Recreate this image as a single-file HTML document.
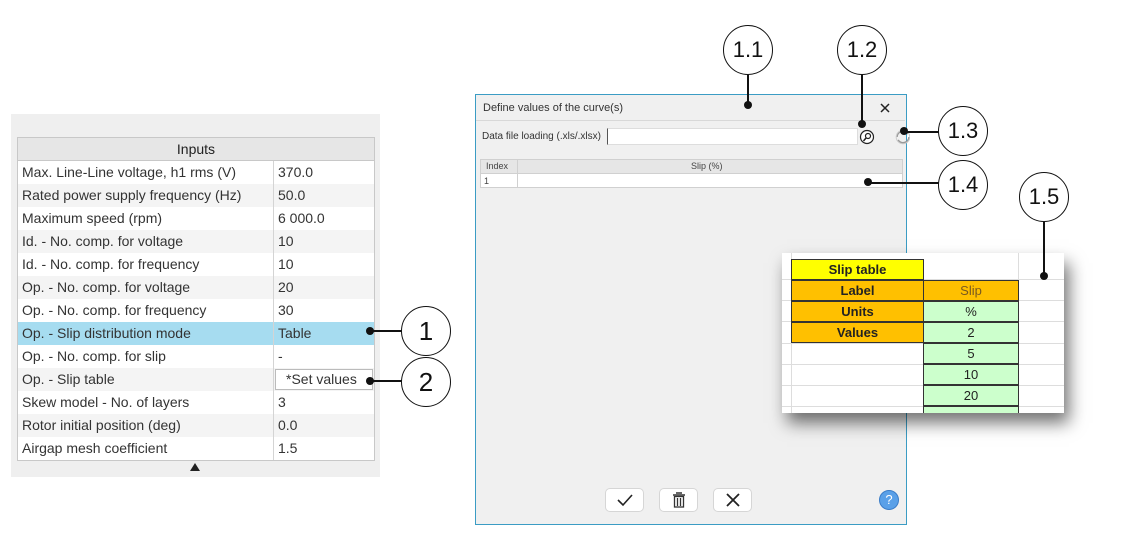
<!DOCTYPE html>
<html><head><style>
*{box-sizing:border-box;margin:0;padding:0}
body{width:1124px;height:547px;background:#fff;position:relative;font-family:"Liberation Sans",sans-serif;overflow:hidden}
.a{position:absolute}
.lp{left:11px;top:114px;width:369px;height:363px;background:#efefef}
.tb{left:17px;top:137px;width:358px;border:1px solid #c8c8c8;background:#fff}
.tb .h{height:23px;background:#e6e6e6;text-align:center;font-size:14px;line-height:23px;color:#222;border-bottom:1px solid #c8c8c8}
.tb .r{height:23px;display:flex;font-size:14px;line-height:23px;color:#333}
.tb .r:nth-child(odd){background:#f4f4f4}
.tb .r div:first-child{width:256px;padding-left:4px;border-right:1px solid #d4d4d4}
.tb .r div:last-child{padding-left:4px;flex:1}
.tb .r.s{background:#a6dcf0!important}
.circ{position:absolute;width:50px;height:50px;border:1.3px solid #111;border-radius:50%;background:#fff;text-align:center;line-height:48px;font-size:22px;color:#111}
.ln{position:absolute;background:#111}
.dot{position:absolute;width:8px;height:8px;border-radius:50%;background:#111}
.dlg{left:475px;top:94px;width:432px;height:431px;border:1.5px solid #3b9cc4;background:#f0f0f0}
.btn{position:absolute;top:488px;width:39px;height:24px;border:1px solid #d6d6d6;border-radius:5px;background:#fff}
.btn svg{position:absolute;left:10px;top:3px}
.xl{left:782px;top:253px;width:282px;height:160px;background:#fff;box-shadow:5px 10px 16px rgba(0,0,0,.55);overflow:hidden}
.xl .c{position:absolute;font-family:"Liberation Sans",sans-serif;font-size:13px;text-align:center;line-height:20px;color:#222}
</style></head><body>
<div class="a lp"></div>
<div class="a tb">
<div class="h">Inputs</div>
<div class="r"><div>Max. Line-Line voltage, h1 rms (V)</div><div>370.0</div></div>
<div class="r"><div>Rated power supply frequency (Hz)</div><div>50.0</div></div>
<div class="r"><div>Maximum speed (rpm)</div><div>6 000.0</div></div>
<div class="r"><div>Id. - No. comp. for voltage</div><div>10</div></div>
<div class="r"><div>Id. - No. comp. for frequency</div><div>10</div></div>
<div class="r"><div>Op. - No. comp. for voltage</div><div>20</div></div>
<div class="r"><div>Op. - No. comp. for frequency</div><div>30</div></div>
<div class="r s"><div>Op. - Slip distribution mode</div><div>Table</div></div>
<div class="r"><div>Op. - No. comp. for slip</div><div>-</div></div>
<div class="r"><div>Op. - Slip table</div><div><span style="display:block;border:1px solid #bbb;background:#fff;margin:1px 1px 1px -3px;line-height:19px;padding-left:10px">*Set values</span></div></div>
<div class="r"><div>Skew model - No. of layers</div><div>3</div></div>
<div class="r"><div>Rotor initial position (deg)</div><div>0.0</div></div>
<div class="r"><div>Airgap mesh coefficient</div><div>1.5</div></div>
</div>
<div class="a" style="left:190px;top:463px;width:0;height:0;border-left:5px solid transparent;border-right:5px solid transparent;border-bottom:8px solid #222"></div>

<div class="a dlg">
<div class="a" style="left:0;top:0;width:429px;height:26px;border-bottom:1px solid #d8d8d8;font-size:11px;line-height:26px;padding-left:7px;color:#333">Define values of the curve(s)</div>
<svg class="a" style="left:404px;top:8px" width="10" height="10"><path d="M1 1L9 9M9 1L1 9" stroke="#222" stroke-width="1.5"/></svg>
<div class="a" style="left:6px;top:36px;font-size:10px;color:#333">Data file loading (.xls/.xlsx)</div>
<div class="a" style="left:131px;top:33px;width:251px;height:17px;background:#fff;border:1px solid #ddd;border-left:1px solid #555"></div>
<div class="a" style="left:4px;top:64px;width:423px;height:29px;border:1px solid #d0d0d0;background:#fff;font-size:9px;color:#444">
<div class="a" style="left:0;top:0;width:421px;height:14px;background:#e6e6e6;border-bottom:1px solid #d0d0d0"></div>
<div class="a" style="left:36px;top:0;width:1px;height:28px;background:#d0d0d0"></div>
<div class="a" style="left:5px;top:1px">Index</div>
<div class="a" style="left:210px;top:1px">Slip (%)</div>
<div class="a" style="left:3px;top:16px">1</div>
</div>
</div>
<svg class="a" style="left:858px;top:129px" width="52" height="18">
<circle cx="9" cy="8" r="6.5" fill="#fff" stroke="#222" stroke-width="1.2"/><circle cx="10" cy="7" r="2.5" fill="none" stroke="#222" stroke-width="1.2"/><line x1="8" y1="9" x2="5.5" y2="12" stroke="#222" stroke-width="1.5"/>
<path d="M39 8a6 6 0 0 1 11-3M51 8a6 6 0 0 1-11 3" fill="none" stroke="#999" stroke-width="1.6"/><circle cx="45" cy="8" r="6.8" fill="none" stroke="#ccc" stroke-width="1"/>
</svg>
<div class="btn" style="left:605px"><svg width="18" height="16"><path d="M2 8L7 13L16 3" fill="none" stroke="#222" stroke-width="1.6"/></svg></div>
<div class="btn" style="left:659px"><svg width="18" height="16"><path d="M6 1h6M3 3h12" stroke="#333" stroke-width="1.5"/><rect x="4.5" y="4.5" width="9" height="10.5" fill="none" stroke="#333" stroke-width="1.3"/><path d="M7.5 6v8M10.5 6v8" stroke="#333" stroke-width="1.3"/></svg></div>
<div class="btn" style="left:713px"><svg width="18" height="16"><path d="M3 2L15 14M15 2L3 14" stroke="#222" stroke-width="1.8"/></svg></div>
<div class="a" style="left:879px;top:490px;width:20px;height:20px;border-radius:50%;background:#5aa0e8;border:1px solid #3a7cc8;color:#fff;font-size:13px;text-align:center;line-height:18px">?</div>

<div class="a xl">
<div class="a" style="left:9px;top:0;width:1px;height:160px;background:#ddd"></div>
<div class="a" style="left:236px;top:0;width:1px;height:160px;background:#ddd"></div>
<div class="a" style="left:0;top:26px;width:282px;height:1px;background:#ddd"></div>
<div class="a" style="left:0;top:47px;width:282px;height:1px;background:#ddd"></div>
<div class="a" style="left:0;top:68px;width:282px;height:1px;background:#ddd"></div>
<div class="a" style="left:0;top:90px;width:282px;height:1px;background:#ddd"></div>
<div class="a" style="left:0;top:111px;width:282px;height:1px;background:#ddd"></div>
<div class="a" style="left:0;top:132px;width:282px;height:1px;background:#ddd"></div>
<div class="a" style="left:0;top:153px;width:282px;height:1px;background:#ddd"></div>
<div class="c" style="left:9px;top:6px;width:133px;height:21px;background:#ffff00;border:1px solid #333;font-weight:bold">Slip table</div>
<div class="c" style="left:9px;top:27px;width:133px;height:21px;background:#ffc000;border:1px solid #333;font-weight:bold">Label</div>
<div class="c" style="left:9px;top:48px;width:133px;height:21px;background:#ffc000;border:1px solid #333;font-weight:bold">Units</div>
<div class="c" style="left:9px;top:69px;width:133px;height:21px;background:#ffc000;border:1px solid #333;font-weight:bold">Values</div>
<div class="c" style="left:141px;top:27px;width:96px;height:21px;background:#ffc000;border:1px solid #333;color:#7a5a20">Slip</div>
<div class="c" style="left:141px;top:48px;width:96px;height:21px;background:#ccffcc;border:1px solid #333">%</div>
<div class="c" style="left:141px;top:69px;width:96px;height:21px;background:#ccffcc;border:1px solid #333">2</div>
<div class="c" style="left:141px;top:90px;width:96px;height:21px;background:#ccffcc;border:1px solid #333">5</div>
<div class="c" style="left:141px;top:111px;width:96px;height:21px;background:#ccffcc;border:1px solid #333">10</div>
<div class="c" style="left:141px;top:132px;width:96px;height:21px;background:#ccffcc;border:1px solid #333">20</div>
<div class="c" style="left:141px;top:153px;width:96px;height:21px;background:#ccffcc;border:1px solid #333"></div>
</div>

<div class="ln" style="left:747px;top:75px;width:1.5px;height:30px"></div><div class="dot" style="left:744px;top:101px"></div>
<div class="circ" style="left:723px;top:25px">1.1</div>
<div class="ln" style="left:861px;top:75px;width:1.5px;height:50px"></div><div class="dot" style="left:858px;top:120px"></div>
<div class="circ" style="left:837px;top:25px">1.2</div>
<div class="ln" style="left:904px;top:131px;width:35px;height:1.5px"></div><div class="dot" style="left:900px;top:127px"></div>
<div class="circ" style="left:938px;top:106px">1.3</div>
<div class="ln" style="left:868px;top:182px;width:71px;height:1.5px"></div><div class="dot" style="left:864px;top:178px"></div>
<div class="circ" style="left:938px;top:160px">1.4</div>
<div class="ln" style="left:1043px;top:222px;width:1.5px;height:54px"></div><div class="dot" style="left:1040px;top:272px"></div>
<div class="circ" style="left:1019px;top:172px">1.5</div>
<div class="ln" style="left:370px;top:330px;width:32px;height:1.5px"></div><div class="dot" style="left:366px;top:327px"></div>
<div class="circ" style="left:401px;top:306px;font-size:26px">1</div>
<div class="ln" style="left:370px;top:380px;width:32px;height:1.5px"></div><div class="dot" style="left:366px;top:377px"></div>
<div class="circ" style="left:401px;top:357px;font-size:26px">2</div>
</body></html>
